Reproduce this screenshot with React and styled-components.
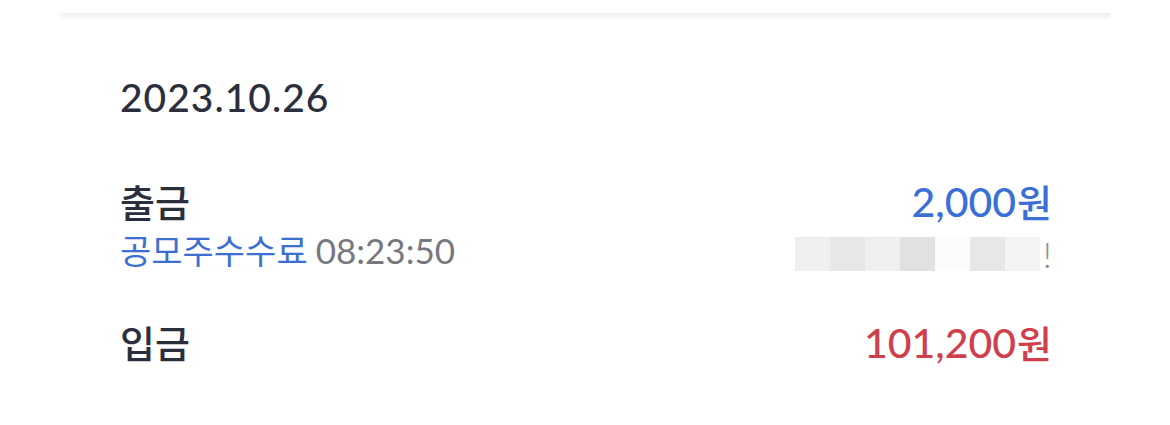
import React from 'react';
import styled, { createGlobalStyle } from 'styled-components';

const GlobalStyle = createGlobalStyle`
  body {
    margin: 0;
    background: #ffffff;
    font-family: Lato, "Noto Sans CJK KR", sans-serif;
  }
`;

const Page = styled.div`
  width: 1170px;
  height: 425px;
  padding: 13px 60px 0;
  box-sizing: border-box;
`;

const Divider = styled.div`
  height: 6px;
  background: linear-gradient(#efefef, #f6f6f6 60%, #fbfbfb);
`;

const Section = styled.div`
  padding: 55px 58px 0 60px;
`;

const DateTitle = styled.div`
  font-size: 39px;
  font-weight: 500;
  color: #2b2e3c;
  line-height: 46px;
  letter-spacing: 1px;
`;

const Row = styled.div`
  display: flex;
  justify-content: space-between;
  align-items: flex-start;
  margin-top: ${({ $gap }) => $gap}px;
`;

const Col = styled.div`
  display: flex;
  flex-direction: column;
  align-items: ${({ $right }) => ($right ? 'flex-end' : 'flex-start')};
`;

const Kind = styled.div`
  font-family: "Noto Sans CJK KR", sans-serif;
  font-size: 38px;
  font-weight: 500;
  color: #2b2e3c;
  line-height: 48px;
`;

const Amount = styled.div`
  font-size: 41px;
  font-weight: 500;
  line-height: 48px;
  color: ${({ $color }) => $color};
`;

const Won = styled.span`
  font-family: "Noto Sans CJK KR", sans-serif;
  font-size: 38px;
  margin-left: 1px;
`;

const Sub = styled.div`
  display: flex;
  align-items: baseline;
  gap: 8px;
  margin-top: 5px;
  line-height: 40px;
`;

const Memo = styled.span`
  font-family: "Noto Sans CJK KR", sans-serif;
  font-size: 34px;
  color: #3b6fd2;
`;

const Time = styled.span`
  font-size: 35px;
  color: #77787d;
`;

const Blur = styled.div`
  display: flex;
  align-items: center;
  height: 34px;
  margin-top: 11px;
`;

const Block = styled.div`
  width: 35px;
  height: 34px;
  background: ${({ $shade }) => $shade};
`;

const Bang = styled.span`
  font-size: 36px;
  font-weight: 300;
  line-height: 34px;
  color: #8e8e8e;
  margin-left: 3px;
`;

const shades = ['#efefef', '#e7e7e8', '#efefef', '#e1e1e1', '#fafbfc', '#e7e7e8', '#f3f3f3'];

export default function App() {
  return (
    <>
      <GlobalStyle />
      <Page>
        <Divider />
        <Section>
          <DateTitle>2023.10.26</DateTitle>
          <Row $gap={57}>
            <Col>
              <Kind>출금</Kind>
              <Sub>
                <Memo>공모주수수료</Memo>
                <Time>08:23:50</Time>
              </Sub>
            </Col>
            <Col $right>
              <Amount $color="#3b6fd8">
                2,000<Won>원</Won>
              </Amount>
              <Blur>
                {shades.map((s, i) => (
                  <Block key={i} $shade={s} />
                ))}
                <Bang>!</Bang>
              </Blur>
            </Col>
          </Row>
          <Row $gap={47}>
            <Kind>입금</Kind>
            <Amount $color="#d0404c">
              101,200<Won>원</Won>
            </Amount>
          </Row>
        </Section>
      </Page>
    </>
  );
}
